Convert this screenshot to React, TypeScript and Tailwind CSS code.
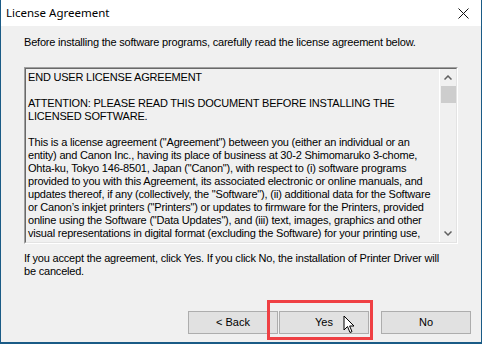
import { useState } from 'react'

const lines = [
  'END USER LICENSE AGREEMENT',
  '',
  'ATTENTION: PLEASE READ THIS DOCUMENT BEFORE INSTALLING THE',
  'LICENSED SOFTWARE.',
  '',
  'This is a license agreement ("Agreement") between you (either an individual or an',
  'entity) and Canon Inc., having its place of business at 30-2 Shimomaruko 3-chome,',
  'Ohta-ku, Tokyo 146-8501, Japan ("Canon"), with respect to (i) software programs',
  'provided to you with this Agreement, its associated electronic or online manuals, and',
  'updates thereof, if any (collectively, the "Software"), (ii) additional data for the Software',
  'or Canon\u2019s inkjet printers ("Printers") or updates to firmware for the Printers, provided',
  'online using the Software ("Data Updates"), and (iii) text, images, graphics and other',
  'visual representations in digital format (excluding the Software) for your printing use,',
  'provided to you by Canon or any third party through the Software or otherwise by',
]

function App() {
  const [accepted, setAccepted] = useState(false)

  return (
    <div className="w-[482px] h-[344px] flex flex-col bg-[#f0f0f0] border-x border-b-2 border-[#1a5b86] overflow-hidden" style={{ fontFamily: '"Liberation Sans", Arial, sans-serif' }}>
      {/* Title bar */}
      <div className="h-[26px] bg-white flex items-center justify-between pl-[5px] pr-[10px] shrink-0">
        <span className="text-[11.5px] text-black" style={{ fontFamily: '"Noto Sans", "Open Sans", sans-serif' }}>License Agreement</span>
        <svg width="11" height="11" viewBox="0 0 11 11" className="mr-[2px]">
          <path d="M0.5 0.5 L10.5 10.5 M10.5 0.5 L0.5 10.5" stroke="#111" strokeWidth="1" />
        </svg>
      </div>

      {/* Body */}
      <div className="flex-1 flex flex-col px-[23px] text-[11px] tracking-[-0.2px] text-black">
        <p className="mt-[10px] leading-[13px] whitespace-nowrap">Before installing the software programs, carefully read the license agreement below.</p>

        <div className="mt-[18px] h-[177px] w-[434px] flex border border-t-[#a0a0a0] border-l-[#a0a0a0] border-r-white border-b-white">
          <div className="flex-1 flex border border-t-[#696969] border-l-[#696969] border-r-[#e3e3e3] border-b-[#e3e3e3] bg-[#f0f0f0]">
            <div className="flex-1 overflow-hidden pl-[2px] pt-[2px] leading-[13px]">
              {lines.map((l, i) => (
                <div key={i} className="h-[13px] whitespace-nowrap">{l}</div>
              ))}
            </div>
            <div className="w-[17px] flex flex-col items-center bg-[#f0f0f0] border-l border-white">
              <div className="h-[17px] flex items-center justify-center">
                <svg width="8" height="5" viewBox="0 0 8 5"><path d="M0.5 4.5 L4 1 L7.5 4.5" stroke="#606060" strokeWidth="1.5" fill="none" /></svg>
              </div>
              <div className="w-[15px] h-[17px] bg-[#cdcdcd]" />
              <div className="flex-1" />
              <div className="h-[17px] flex items-center justify-center">
                <svg width="8" height="5" viewBox="0 0 8 5"><path d="M0.5 0.5 L4 4 L7.5 0.5" stroke="#606060" strokeWidth="1.5" fill="none" /></svg>
              </div>
            </div>
          </div>
        </div>

        <p className="mt-[8px] leading-[13px] whitespace-nowrap">If you accept the agreement, click Yes. If you click No, the installation of Printer Driver will<br />be canceled.</p>

        <div className="mt-auto mb-[8px] -mr-[13px] flex justify-end gap-[1px] tracking-normal">
          <button className="w-[90px] h-[23px] bg-[#e1e1e1] border border-[#adadad]">&lt; Back</button>
          <div className="relative">
            <button onClick={() => setAccepted(!accepted)} className="w-[90px] h-[23px] bg-[#e1e1e1] border border-[#adadad] shadow-[inset_0_0_0_1px_#e1e1e1]">Yes</button>
            <div className="absolute left-[-12px] top-[-11px] w-[106px] h-[40px] border-[3px] border-[#ef4044] pointer-events-none" />
            <svg className="absolute left-[64px] top-[4px]" width="12" height="19" viewBox="0 0 12 19">
              <path d="M1 1 L1 15 L4.5 11.5 L7 17.5 L9 16.6 L6.6 11 L11 11 Z" fill="white" stroke="black" strokeWidth="1" />
            </svg>
          </div>
          <button className="ml-[11px] w-[90px] h-[23px] bg-[#e1e1e1] border border-[#adadad]">No</button>
        </div>
      </div>
      {accepted && <span className="hidden">ok</span>}
    </div>
  )
}

export default App
